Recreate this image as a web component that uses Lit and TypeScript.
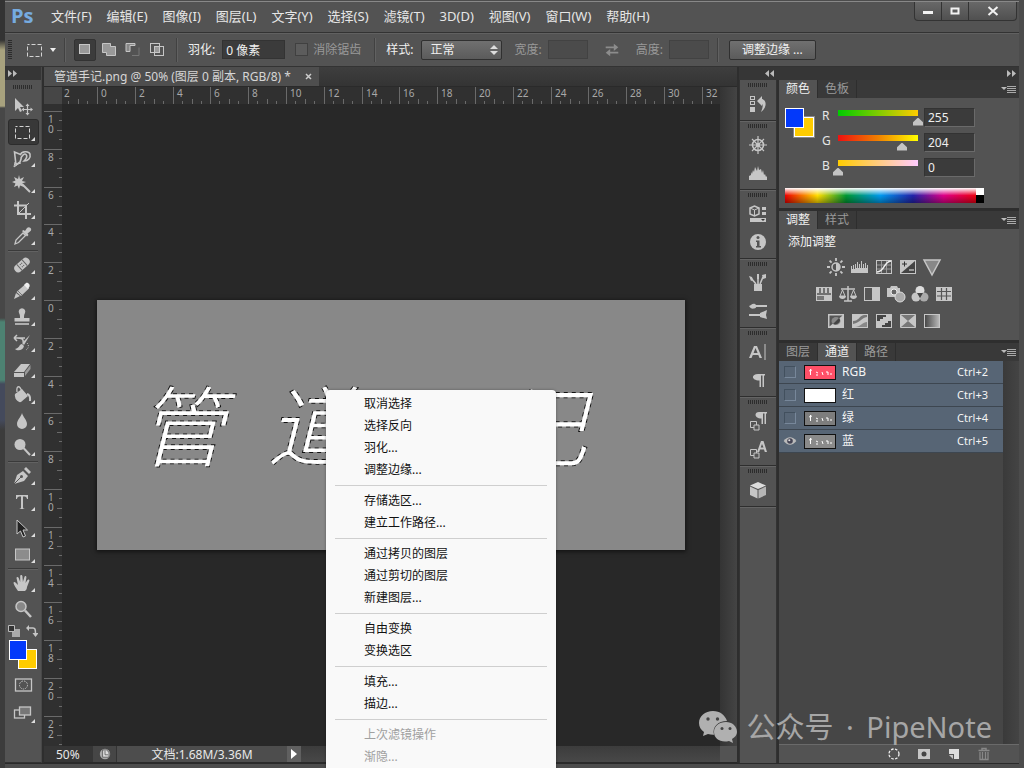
import { LitElement, html, svg, css } from "lit";
import { customElement, property } from "lit/decorators.js";
import { classMap } from "lit/directives/class-map.js";

const L = "#c6c6c6";

const glyphs: Record<string, any> = {
  move: svg`<path d="M2 2v13l3-3 2 4 2-1-2-4h4z" fill=${L}/><path d="M14.500 9v9M10 13.500h9" stroke=${L} stroke-width="1.200"/><path d="M14.500 7.500l-2 2.500h4zM14.500 19.500l-2-2.500h4zM8.500 13.500l2.500-2v4zM20 13.500l-2.500-2v4z" fill=${L}/>`,
  marquee: svg`<rect x="3.500" y="4.500" width="14" height="12" fill="none" stroke="#d4d4d4" stroke-dasharray="4 2" stroke-dashoffset="2"/>`,
  lasso: svg`<path d="M4 17L2.500 4l6 2.500c1-3 8-4 9.500-.500 1 4-2 7-6 7 2-2 3.500-5 2-6.500S9 8 9 11l-1 3z" fill="none" stroke=${L} stroke-width="1.600"/><path d="M3 14l-1 5 4-3 3-1" fill="none" stroke=${L}/>`,
  wand: svg`<path d="M7 1l1 4 4-2-2 4 4 1-4 1.500 2 3.500-4-1.500L7 15l-1.500-3.500L2 13l1.500-3.500L0 8l3.500-1.500L2 3l4 2z" fill=${L}/><path d="M10 10l8 8" stroke=${L} stroke-width="2"/>`,
  crop: svg`<path d="M6 1v13h13M2 5.500h12V19" fill="none" stroke=${L} stroke-width="2"/><path d="M6 14L17 3" stroke=${L}/>`,
  dropper: svg`<path d="M3 18l1-4 7-7 2.500 2.500-7 7z" fill="none" stroke=${L} stroke-width="1.300"/><path d="M10 5l1.500-1 1.500 1 2-3c1-1 2.500-1 3.500 0s1 2.500-.500 3.500l-2.500 2 1 1.500-1.500 1.500z" fill=${L}/>`,
  heal: svg`<g transform="rotate(-42 10 10)"><rect x="1" y="6" width="18" height="8" rx="4" fill=${L}/><path d="M6.500 6v8M13.500 6v8" stroke="#666"/><path d="M8.500 8.500h3M8.500 11.500h3" stroke="#555" stroke-dasharray="1 1"/></g>`,
  brush: svg`<path d="M2 18l2-6 4 3zM4.500 11L13 3.500l4 4L9 15z" fill=${L}/><path d="M12 4l2-2c1.500-1 4.500 1.500 3.500 3.500L16 8z" fill="#eee"/><path d="M6 10l4 4" stroke="#777"/>`,
  stamp: svg`<path d="M7 6a3.300 3.300 0 1 1 6 0c-1 2-1 3-1 5h5.500v3.500h-15V11H8c0-2 0-3-1-5z" fill=${L}/><path d="M3 17h14" stroke=${L} stroke-width="1.600"/>`,
  history: svg`<path d="M2 5h11M2 5l3-3M2 5l3 3M5 5c4 0 7 1 6 4" fill="none" stroke=${L} stroke-width="1.500"/><path d="M18 2L10 10l2 2zM10 11c-3 0-2 4-7 5 2 2 8 2 9-3z" fill=${L}/><path d="M15 10c2 2 2 5-1 7" stroke=${L} fill="none" stroke-dasharray="1 1.500"/>`,
  eraser: svg`<path d="M2 13l7-8h9l-6 8zM2 14h10v4H2z" fill=${L}/><path d="M13 13l5.500-7v4L13 17z" fill="#999"/>`,
  bucket: svg`<path d="M3 9l7-5 6 7-7 6c-3 1-7-4-6-8z" fill=${L}/><path d="M10 7C8 0 4 0 5 7" fill="none" stroke=${L} stroke-width="1.300"/><path d="M15 9c4 1 3 4 3 7" fill="none" stroke=${L} stroke-width="2"/>`,
  blur: svg`<path d="M10 2c1 4 5 7 5 11a5 5 0 0 1-10 0c0-4 4-7 5-11z" fill=${L}/>`,
  dodge: svg`<circle cx="8" cy="7.500" r="5.500" fill=${L}/><path d="M11.500 11l6.500 7" stroke=${L} stroke-width="2"/>`,
  pen: svg`<path d="M2 18l3-9 6-4 5 5-4 5z" fill=${L}/><path d="M2 18l7-7" stroke="#555"/><circle cx="9.500" cy="10.500" r="1.500" fill="#555"/><path d="M12 3l2-2 5 5-2 2z" fill=${L}/>`,
  type: svg`<path d="M4 3h12v4h-1c-.500-2-1-2.500-4-2.500V15c0 1.500.500 1.500 2 2H7c1.500-.500 2-.500 2-2V4.500C6 4.500 5.500 5 5 7H4z" fill=${L}/>`,
  arrow: svg`<path d="M5 2v14l3.500-3 2.500 6 2.500-1-2.500-6h4.500z" fill="#222" stroke=${L}/>`,
  rect: svg`<rect x="3.500" y="5" width="14" height="11" fill="#8c8c8c" stroke=${L}/>`,
  hand: svg`<path d="M6 18C4 15 2 12 1.500 10c0-1.500 1.500-1.500 2.500 0l2 2L4.500 5c0-1.500 1.700-1.500 2.200 0l1.500 4V3c0-1.500 2-1.500 2.200 0l.500 6 1.500-5c.500-1.500 2.200-1 2 .500L13.500 10l2-3c1-1.200 2.300-.300 1.800 1L15 14c0 2-1 3-2 4z" fill=${L}/>`,
  zoom: svg`<circle cx="8" cy="7.500" r="5" fill="#888" stroke=${L} stroke-width="1.500"/><path d="M12 11.500l6 6.500" stroke=${L} stroke-width="2.500"/>`,
  mask: svg`<rect x="2.500" y="4" width="16" height="12" fill="none" stroke=${L} stroke-width="1.300"/><circle cx="10.500" cy="10" r="4" fill="none" stroke=${L} stroke-dasharray="1.500 1.200"/>`,
  screen: svg`<rect x="2.500" y="7" width="10" height="8" fill="none" stroke=${L} stroke-width="1.300"/><rect x="7.500" y="4" width="11" height="8" fill="#777" stroke=${L} stroke-width="1.300"/>`,
  selNew: svg`<rect x="4.500" y="4.500" width="10" height="9" fill="#999" stroke=${L}/>`,
  selAdd: svg`<path d="M3.500 3.500h8v3h5v9h-9v-3h-4z" fill="#999" stroke=${L}/>`,
  selSub: svg`<path d="M3 11.500V3.500h9v2H7v6z" fill="#888" stroke=${L}/><path d="M9 15.500h7v-8" fill="none" stroke="#777"/>`,
  selInt: svg`<rect x="3.500" y="3.500" width="9" height="9" fill="none" stroke=${L}/><rect x="7.500" y="6.500" width="9" height="9" fill="none" stroke=${L}/><rect x="8" y="7" width="4" height="5" fill="#999"/>`,
  swap: svg`<path d="M3 7h10M7 13h10" stroke="#8c8c8c" stroke-width="2"/><path d="M12 3l5 4-5 4zM8 9l-5 4 5 4z" fill="#8c8c8c"/>`,
  historyPanel: svg`<g fill="none" stroke=${L}><rect x="2.500" y="2.500" width="4" height="3"/><rect x="2.500" y="7.500" width="4" height="3"/></g><rect x="2" y="13" width="5" height="5" fill=${L}/><path d="M9 7l5-5v3c5 1 5 9-1 13 2-5 2-7 1-8v2z" fill=${L}/>`,
  wheel: svg`<circle cx="10" cy="10" r="5.500" fill="none" stroke=${L} stroke-width="1.600"/><circle cx="10" cy="10" r="2" fill=${L}/><path d="M10 1v18M1 10h18M4 4l12 12M16 4L4 16" stroke=${L} stroke-width="1.200"/>`,
  histogram: svg`<path d="M1 17v-4l2-1v-3l1 2 1-4 1 2 1-5 2 4 1-5 1 4 2-1 1 4 1-3 1 5 1-1 1 3 1-1v4z" fill=${L}/>`,
  props: svg`<path d="M2 4l4.500-2L11 4v6l-4.500 2L2 10z" fill="none" stroke=${L} stroke-width="1.500"/><path d="M2 4l4.500 2L11 4M6.500 6v6" fill="none" stroke=${L}/><path d="M14 3h4v3h-4zM14 8h4v3h-4zM2 14h16v4H2z" fill=${L}/><path d="M13 15h4l-2 2z" fill="#333"/>`,
  info: svg`<circle cx="10" cy="10" r="8" fill=${L}/><path d="M8 8.500h3.500V14H13v1.500H8V14h1v-4H8z" fill="#555"/><circle cx="10" cy="5.500" r="1.500" fill="#555"/>`,
  brushes: svg`<path d="M6 11h8v7H6z" fill=${L}/><path d="M10 11V2M8 11L3 5M12 11l3-7" stroke=${L} stroke-width="1.600"/><path d="M1 3l3 1 1 3-2 1zM9 1h2v5H9zM14 2l4-1v4l-3 1z" fill=${L}/>`,
  presets: svg`<path d="M7 5h12M1 14h11" stroke=${L} stroke-width="2"/><path d="M1 5c2 0 3-3 6-2 2 1 2 4-1 4.500-2 .500-4-.500-5-2.500zM12 12l7-3-1 5 1 4-7-2z" fill=${L}/>`,
  charPanel: svg`<path d="M1 16L6 4h3l5 12h-2.500l-1.200-3H4.800L3.500 16zM5.600 11h4L7.500 6z" fill=${L}/><path d="M17 2v16" stroke=${L}/>`,
  para: svg`<path d="M10 4h7v1.500h-1V17h-1.500V5.500H13V17h-1.500v-6.500C3 10.500 3 4 10 4z" fill=${L}/>`,
  paraStyle: svg`<path d="M11 1h8v1.500h-1V13h-1.500V2.500H15V13h-1.500V7.500C6 7.500 6 1 11 1z" fill=${L}/><path d="M2.500 10.500h6v6h-6z" fill="none" stroke=${L}/><path d="M6 14h5v5H6z" fill="#555" stroke=${L}/>`,
  charStyle: svg`<path d="M9 13L13 2h2.500L19 13h-2.200l-.800-2.500h-4l-.800 2.500zM12.700 8.500h2.800L14 5z" fill=${L}/><path d="M2.500 10.500h6v6h-6z" fill="none" stroke=${L}/><path d="M6 14h5v5H6z" fill="#555" stroke=${L}/>`,
  cube: svg`<path d="M10 2l8 3.500-8 3.500-8-3.500z" fill="#ddd"/><path d="M2 6.500L9.500 10v8.500L2 15z" fill=${L}/><path d="M18 6.500L10.500 10v8.500L18 15z" fill="#b5b5b5"/>`,
  bright: svg`<circle cx="10" cy="10" r="4" fill="none" stroke=${L} stroke-width="1.500"/><path d="M10 6a4 4 0 0 1 0 8z" fill=${L}/><path d="M10 1v3M10 16v3M1 10h3M16 10h3M3.600 3.600l2 2M14.400 14.400l2 2M3.600 16.400l2-2M14.400 5.600l2-2" stroke=${L} stroke-width="1.800"/>`,
  levels: svg`<path d="M1 16V9h1v3h1V8h1v4h1V7h1v4h1V5h1v6h1V7h1v4h1V4h1v7h1V7h1v4h1V6h1v5h1V8h1v8z" fill=${L}/>`,
  curves: svg`<rect x="2.500" y="3.500" width="15" height="13" fill="none" stroke=${L}/><path d="M7.500 4v12M12.500 4v12M3 8h14M3 12h14" stroke="#999"/><path d="M3 15c8 0 6-10 14-11" fill="none" stroke="#eee" stroke-width="1.500"/>`,
  exposure: svg`<path d="M2 3h16v14H2z" fill=${L}/><path d="M17 4v12H3z" fill="#444"/><path d="M4 7h5M6.500 4.500v5" stroke="#333"/><path d="M11 13h5" stroke="#eee"/>`,
  vibrance: svg`<path d="M2 3h16l-8 15z" fill="#888" stroke=${L} stroke-width="1.500"/>`,
  hue: svg`<path d="M2 3h16v14H2z" fill=${L}/><path d="M3 10h14M6 4v5M10 4v5M14 4v5" stroke="#555" stroke-width="1.500"/><path d="M3 12h7v4H3z" fill="#777"/>`,
  balance: svg`<path d="M10 2v15M6 17h8M3 5h14" stroke=${L} stroke-width="1.500"/><path d="M4.500 6L2 12h5zM15.500 6L13 12h5z" fill="none" stroke=${L}/><path d="M1 12h7c0 4-7 4-7 0zM12 12h7c0 4-7 4-7 0z" fill=${L}/>`,
  bw: svg`<rect x="2.500" y="3.500" width="15" height="13" fill="#555" stroke=${L}/><path d="M10 4h7v12h-7z" fill=${L}/>`,
  photo: svg`<path d="M1 4h3l1-2h6l1 2h2v9H1z" fill=${L}/><circle cx="8" cy="8" r="3" fill="#666" stroke="#eee"/><circle cx="14" cy="13" r="5" fill="#aaa" stroke="#ddd"/>`,
  mixer: svg`<circle cx="10" cy="6.500" r="4.500" fill="#ddd"/><circle cx="6" cy="13" r="4.500" fill=${L}/><circle cx="14" cy="13" r="4.500" fill="#aaa"/><path d="M7 9h6l-3 5z" fill="#444"/>`,
  lookup: svg`<rect x="2" y="3" width="16" height="14" fill=${L}/><path d="M3 7.500h14M3 12h14M7.500 4v12M12.500 4v12" stroke="#555" stroke-width="1.200"/>`,
  invert: svg`<path d="M2 3h16v14H2z" fill=${L}/><path d="M3.500 4.500h13l-13 11z" fill="#555"/><ellipse cx="10" cy="10" rx="4.500" ry="4" fill="#888"/><path d="M13 7a5 4 0 0 1-6 6z" fill="#444"/>`,
  poster: svg`<path d="M2 3h16v14H2z" fill=${L}/><path d="M3 10c6 0 6-5 11-6h3v2c-6 1-6 5-14 7z" fill="#777"/><path d="M5 16c5 0 8-5 12-5v5z" fill="#888"/>`,
  thresh: svg`<path d="M2 3h16v14H2z" fill=${L}/><path d="M3 4h9v2H9v2H6v2H3zM8 16v-2h3v-2h3v-2h3v6z" fill="#444"/>`,
  selective: svg`<path d="M2.500 3.500h15v13h-15z" fill="#777" stroke=${L}/><path d="M3 4l7 6-7 6zM17 4l-7 6 7 6z" fill=${L}/>`,
  gradmap: svg`<defs><linearGradient id="gm"><stop stop-color="#444"/><stop offset="1" stop-color="#bbb"/></linearGradient></defs><rect x="2.500" y="3.500" width="15" height="13" fill="url(#gm)" stroke=${L}/>`,
  eye: svg`<path d="M1 10c5-7 13-7 18 0-5 7-13 7-18 0z" fill="#bbb"/><circle cx="10" cy="10" r="4" fill="#445"/><circle cx="9" cy="9" r="1.500" fill="#ddd"/>`,
  loadSel: svg`<circle cx="10" cy="10" r="5" fill="none" stroke="#eee" stroke-width="1.300" stroke-dasharray="2.500 1.500"/>`,
  saveSel: svg`<path d="M4 5h12v10H4z" fill=${L}/><circle cx="10" cy="10" r="2.500" fill="#444"/>`,
  newItem: svg`<path d="M5 5h10v10h-5v-5H5z" fill="#ddd"/><path d="M5 11h4v4z" fill=${L}/>`,
  trash: svg`<path d="M4.500 6.500h11M8 6V4.500h4V6" fill="none" stroke="#888" stroke-width="1.500"/><path d="M6 8v7.500h8V8M8.500 8v7M11.500 8v7" fill="none" stroke="#888" stroke-width="1.300"/>`,
  doc: svg`<circle cx="10" cy="10" r="6.500" fill="#aaa"/><path d="M7 5h5l3 3v6H7z" fill="#ddd" stroke="#555"/><path d="M10 6v5h4" fill="none" stroke="#555"/>`,
};

const icon = (name: string, size = 20) => html`<svg width=${size} height=${size} viewBox="0 0 20 20" aria-hidden="true">${glyphs[name]}</svg>`;
const panelMenu = html`<button class="pm" aria-label="面板菜单"><svg width="15" height="9" viewBox="0 0 15 9"><path d="M0 2h6L3 5z" fill="#bbb"/><path d="M6 1.500h9M6 3.500h9M6 5.500h9M6 7.500h9" stroke="#aaa"/></svg></button>`;

const base = css`
  :host { box-sizing: border-box; font-family: "Noto Sans", "Noto Sans CJK SC", sans-serif; font-size: 12px; line-height: 16px; color: #e6e6e6; }
  *, *::before, *::after { box-sizing: border-box; }
  button, input, select { font: inherit; color: inherit; margin: 0; padding: 0; border: 0; background: none; border-radius: 0; }
  svg { display: block; flex: none; }
  .grip { flex: none; align-self: center; width: 20px; height: 4px; background: repeating-linear-gradient(90deg, #2c2c2c 0 1px, transparent 1px 2px); }
`;

@customElement("ps-menubar")
class PsMenubar extends LitElement {
  static styles = [base, css`
    :host { display: flex; height: 32px; padding-left: 6px; background: #535353; border-bottom: 1px solid #333; border-top: 1px solid #888; }
    .logo { width: 40px; font: bold 20px/27px "Open Sans", "Noto Sans", sans-serif; color: #76abe0; }
    nav { display: flex; flex: 1; gap: 15px; align-items: center; padding-bottom: 2px; white-space: nowrap; font-size: 13px; }
    .ctl { display: flex; height: 19px; margin-right: 2px; border: 1px solid #333; border-top: 0; border-radius: 0 0 4px 4px; background: linear-gradient(#686868, #505050); }
    .ctl button { width: 27px; display: flex; align-items: center; justify-content: center; border-right: 1px solid #333; }
    .ctl button:last-child { width: 47px; border: 0; }
  `];
  render() {
    const items = ["文件(F)", "编辑(E)", "图像(I)", "图层(L)", "文字(Y)", "选择(S)", "滤镜(T)", "3D(D)", "视图(V)", "窗口(W)", "帮助(H)"];
    return html`<div class="logo">Ps</div>
      <nav>${items.map((t) => html`<button>${t}</button>`)}</nav>
      <div class="ctl">
        <button aria-label="最小化"><svg width="12" height="10"><path d="M1 5h10v3H1z" fill="#f2f2f2"/></svg></button>
        <button aria-label="最大化"><svg width="12" height="10"><path d="M2.500 2.500h7v5h-7z" fill="none" stroke="#f2f2f2" stroke-width="2"/></svg></button>
        <button aria-label="关闭"><svg width="12" height="10"><path d="M1.500 1l9 8M10.500 1l-9 8" stroke="#f2f2f2" stroke-width="2"/></svg></button>
      </div>`;
  }
}

@customElement("ps-options")
class PsOptions extends LitElement {
  static styles = [base, css`
    :host { display: flex; align-items: center; height: 34px; padding: 0 0 1px 3px; background: #535353; border-top: 1px solid #616161; border-bottom: 1px solid #333; white-space: nowrap; color: #f0f0f0; }
    .vgrip { width: 4px; height: 20px; margin-right: 12px; background: repeating-linear-gradient(#2c2c2c 0 1px, transparent 1px 2px); }
    .tool { display: flex; align-items: center; gap: 6px; }
    .sep { width: 2px; height: 24px; margin: 0 8px; background: #414141; border-right: 1px solid #616161; }
    .modes { display: flex; gap: 2px; }
    .modes button { width: 22px; height: 22px; display: flex; align-items: center; justify-content: center; border: 1px solid transparent; border-radius: 2px; }
    .modes .on { background: #3c3c3c; border-color: #333; }
    .field { height: 19px; padding: 0 3px; background: #3b3b3b; border: 1px solid #333; }
    .feather { width: 63px; margin: 0 10px 0 7px; }
    .size { width: 40px; margin-left: 6px; background: #4b4b4b; border-color: #424242; }
    .dim { color: #999; }
    .aa { margin-right: 5px; }
    .check { appearance: none; width: 13px; height: 13px; margin-right: 5px; background: #5c5c5c; border: 1px solid #404040; }
    .sel { position: relative; margin: 0 12px 0 8px; }
    select { appearance: none; width: 81px; height: 20px; padding-left: 8px; background: linear-gradient(#707070, #5b5b5b); border: 1px solid #303030; border-radius: 2px; }
    .sel svg { position: absolute; right: 4px; top: 5px; pointer-events: none; }
    .swap { margin: 0 15px; }
    .btn { height: 20px; width: 87px; background: linear-gradient(#707070, #5b5b5b); border: 1px solid #303030; border-radius: 2px; }
    .lead { margin-left: 2px; }
  `];
  render() {
    return html`<div class="vgrip"></div>
      <button class="tool" aria-label="矩形选框工具">${icon("marquee")}<svg width="6" height="4"><path d="M0 0h6L3 4z" fill="#eee"/></svg></button>
      <div class="sep"></div>
      <div class="modes">
        ${["selNew", "selAdd", "selSub", "selInt"].map((n, i) => html`<button class=${classMap({ on: i === 0 })} aria-label="选区模式 ${i + 1}">${icon(n)}</button>`)}
      </div>
      <div class="sep"></div>
      <label class="lead" for="feather">羽化:</label><input id="feather" class="field feather" value="0 像素">
      <input id="aa" type="checkbox" class="check" disabled><label for="aa" class="dim aa">消除锯齿</label>
      <div class="sep"></div>
      <label class="lead" for="style">样式:</label><span class="sel"><select id="style"><option>正常</option></select><svg width="8" height="10"><path d="M0 4h8L4 0zM0 6h8l-4 4z" fill="#ddd"/></svg></span>
      <label class="dim" for="w">宽度:</label><input id="w" class="field size" disabled>
      <button class="swap" aria-label="互换宽高" disabled>${icon("swap", 18)}</button>
      <label class="dim" for="h">高度:</label><input id="h" class="field size" disabled>
      <div class="sep"></div>
      <button class="btn lead">调整边缘 ...</button>`;
  }
}

@customElement("ps-toolbar")
class PsToolbar extends LitElement {
  static styles = [base, css`
    :host { display: flex; flex-direction: column; align-items: center; background: #535353; border-bottom: 1px solid #333; border-right: 1px solid #484848; }
    .head { align-self: stretch; height: 13px; padding: 3px; background: #363636; flex: none; }
    .top { height: 13px; display: flex; flex-direction: column; justify-content: center; flex: none; }
    .tool { position: relative; flex: none; width: 31px; height: 26px; display: flex; align-items: center; justify-content: center; border: 1px solid transparent; border-radius: 3px; }
    .on { background: #383838; border-color: #2c2c2c; }
    .more::after { content: ""; position: absolute; right: 3px; bottom: 3px; border: 2px solid transparent; border-right-color: #ddd; border-bottom-color: #ddd; }
    .more svg { margin-right: 2px; }
    .sep { flex: none; width: 30px; height: 3px; background: linear-gradient(transparent 1px, #3a3a3a 1px 2px, #626262 2px); }
    .mini { flex: none; display: flex; gap: 6px; height: 17px; align-items: center; }
    .sw { flex: none; display: grid; grid-template: 9px 11px 9px / 9px 9px 10px; margin: 1px 0 2px; }
    .fg { grid-area: 1 / 1 / 3 / 3; z-index: 1; background: #0339fa; border: 1px solid #fff; }
    .bg { grid-area: 2 / 2 / 4 / 4; background: #ffcc00; border: 1px solid #fff; }
    .wide { height: 28px; }
  `];
  render() {
    const groups = [
      ["move", "marquee", "lasso", "wand", "crop", "dropper"],
      ["heal", "brush", "stamp", "history", "eraser", "bucket", "blur", "dodge"],
      ["pen", "type", "arrow", "rect"],
      ["hand", "zoom"],
    ];
    const plain = ["move", "zoom"];
    return html`<div class="head"><svg width="9" height="7"><path d="M0 0l4 3.500L0 7zM5 0l4 3.500L5 7z" fill="#bbb"/></svg></div>
      <div class="top"><div class="grip"></div></div>
      ${groups.map((g, i) => html`${i ? html`<div class="sep"></div>` : ""}${g.map((n) => html`<button aria-label=${n} class=${classMap({ tool: true, on: n === "marquee", more: !plain.includes(n) })}>${icon(n)}</button>`)}`)}
      <div class="mini">
        <svg width="12" height="12"><path d="M4 4h8v8H4z" fill="#aaa"/><path d="M.500.500h6v6h-6z" fill="#333" stroke="#bbb"/></svg>
        <svg width="12" height="12"><path d="M2 3h5c2 0 2.500 1 2.500 6" fill="none" stroke="#c6c6c6" stroke-width="1.500"/><path d="M0 3l3-3v6zM6.500 8h6l-3 4z" fill="#c6c6c6"/></svg>
      </div>
      <div class="sw"><div class="fg"></div><div class="bg"></div></div>
      <button class="tool wide" aria-label="快速蒙版">${icon("mask")}</button>
      <button class="tool wide more" aria-label="屏幕模式">${icon("screen")}</button>`;
  }
}

const UNIT = 37.8;

@customElement("ps-document")
class PsDocument extends LitElement {
  static styles = [base, css`
    :host { display: grid; grid-template-columns: 18px minmax(0, 1fr) 17px; grid-template-rows: 20px 17px minmax(0, 1fr) 17px; background: #343434; }
    .tabs { grid-column: 1 / -1; display: flex; background: linear-gradient(#3e3e3e, #343434); border-bottom: 1px solid #2a2a2a; }
    .tab { display: flex; align-items: center; gap: 14px; padding: 0 7px 0 10px; background: #4e4e4e; color: #d6d6d6; white-space: nowrap; }
    .corner { background: #464646; }
    .ruler { background: #303030; width: 100%; height: 100%; overflow: hidden; }
    .ruler text { font-family: "Noto Sans", sans-serif; font-size: 10px; fill: #a8a8a8; }
    .vs { grid-row: 2 / 4; grid-column: 3; background: linear-gradient(90deg, #343434, #444); }
    .stage { position: relative; overflow: hidden; background: #282828; }
    .image { position: absolute; left: 35px; top: 196px; width: 588px; height: 250px; background: #888; box-shadow: 0 1px 4px 1px rgba(0, 0, 0, .5); }
    .script { font: italic 300 88px "Noto Sans CJK SC", sans-serif; fill: #fff; stroke: #111; stroke-width: 2; stroke-dasharray: 4 4; paint-order: stroke; }
    .status { grid-column: 1 / -1; display: flex; align-items: stretch; background: #464646; border-bottom: 1px solid #2a2a2a; color: #e8e8e8; line-height: 18px; }
    .zoom { width: 49px; padding-left: 12px; background: #363636; }
    .ic { width: 24px; display: flex; align-items: center; justify-content: center; border-right: 1px solid #333; background: #464646; }
    .size { width: 170px; text-align: center; background: #4d4d4d; }
    .go { width: 14px; display: flex; align-items: center; justify-content: center; background: #606060; }
    .fill { flex: 1; background: linear-gradient(#3c3c3c, #484848); }
    .end { width: 17px; background: #535353; }
  `];
  ticks(vertical: boolean) {
    const out = [];
    const origin = vertical ? 196 : 35;
    const last = vertical ? 11 : 16;
    for (let i = vertical ? -5 : -1; i <= last; i++) {
      const p = Math.round(origin + i * UNIT);
      const line = (o: number, len: number) => {
        const q = Math.round(p + o) + 0.5;
        return vertical ? svg`<path d="M${18 - len} ${q}H18" stroke="#6a6a6a"/>` : svg`<path d="M${q} ${17 - len}V17" stroke="#6a6a6a"/>`;
      };
      const label = String(Math.abs(i * 2));
      out.push(line(0, 18), line(UNIT / 4, 3), line(UNIT / 2, 5), line((UNIT * 3) / 4, 3));
      out.push(vertical
        ? [...label].map((d, k) => svg`<text x="4" y=${p + 12 + k * 10}>${d}</text>`)
        : svg`<text x=${i < 0 ? 2 : p + 4} y="10">${label}</text>`);
    }
    return out;
  }
  render() {
    return html`<div class="tabs"><div class="tab"><span>管道手记.png @ 50% (图层 0 副本, RGB/8) *</span><button aria-label="关闭文档"><svg width="7" height="7"><path d="M1 1l5 5M6 1L1 6" stroke="#ccc" stroke-width="1.500"/></svg></button></div></div>
      <div class="corner"></div>
      <svg class="ruler">${this.ticks(false)}</svg>
      <div class="vs"></div>
      <svg class="ruler">${this.ticks(true)}</svg>
      <div class="stage"><svg class="image" viewBox="0 0 588 250">
        <text class="script" x="40 170 290 402" y="160 160 172 160">管道手记</text>
      </svg></div>
      <div class="status">
        <div class="zoom">50%</div><div class="ic">${icon("doc", 16)}</div>
        <div class="size">文档:1.68M/3.36M</div>
        <button class="go" aria-label="状态栏选项"><svg width="6" height="10"><path d="M0 0l6 5-6 5z" fill="#fff"/></svg></button>
        <div class="fill"></div><div class="end"></div>
      </div>`;
  }
}

@customElement("ps-dock")
class PsDock extends LitElement {
  static styles = [base, css`
    :host { display: flex; flex-direction: column; background: #535353; border-left: 1px solid #333; border-right: 1px solid #333; }
    .group { display: flex; flex-direction: column; align-items: center; padding-top: 3px; border-bottom: 1px solid #2e2e2e; box-shadow: 0 1px #646464; }
    .group .grip { margin-bottom: 3px; }
    .item { height: 29px; width: 30px; display: flex; align-items: center; justify-content: center; }
    .item:first-of-type { height: 28px; }
    .item:last-child { height: 30px; padding-bottom: 2px; }
  `];
  render() {
    const g = [["historyPanel"], ["wheel", "histogram"], ["props", "info"], ["brushes", "presets"], ["charPanel", "para"], ["paraStyle", "charStyle"], ["cube"]];
    return g.map((a) => html`<div class="group"><div class="grip"></div>${a.map((n) => html`<button class="item" aria-label=${n}>${icon(n)}</button>`)}</div>`);
  }
}

@customElement("ps-tabs")
class PsTabs extends LitElement {
  @property({ attribute: false }) names: string[] = [];
  @property({ type: Number }) active = 0;
  static styles = [base, css`
    :host { display: flex; align-items: stretch; height: 18px; flex: none; background: #393939; }
    .t { padding: 0 7px; color: #9a9a9a; border-right: 1px solid #2e2e2e; }
    .on { background: #535353; color: #f0f0f0; }
    .pm { margin-left: auto; margin-right: 3px; display: flex; align-items: center; }
  `];
  render() {
    return html`${this.names.map((n, i) => html`<button class=${classMap({ t: true, on: i === this.active })}>${n}</button>`)}${panelMenu}`;
  }
}

@customElement("ps-color")
class PsColor extends LitElement {
  static styles = [base, css`
    :host { display: flex; flex-direction: column; background: #535353; }
    .main { display: flex; gap: 8px; padding: 10px 6px 0; }
    .sw { display: grid; grid-template: 9px 11px 9px / 9px 10px 10px; align-self: start; }
    .fg { grid-area: 1 / 1 / 3 / 3; z-index: 1; background: #0339fa; border: 1px solid #fff; }
    .bg { grid-area: 2 / 2 / 4 / 4; background: #ffcc00; border: 1px solid #fff; outline: 1px solid #888; }
    .rows { display: flex; flex-direction: column; gap: 6px; }
    .row { display: flex; height: 19px; align-items: flex-start; }
    .row label { width: 11px; }
    .row input[type="range"] { appearance: none; width: 90px; height: 16px; margin: 2px 1px 0 0; background: var(--g) 5px 0 / 80px 6px no-repeat; }
    .row input[type="range"]::-webkit-slider-thumb { appearance: none; width: 10px; height: 8px; margin-top: 7px; background: #c4c4c4; clip-path: polygon(50% 0, 100% 60%, 100% 100%, 0 100%, 0 60%); }
    .r { --g: linear-gradient(90deg, #00cc00, #ffcc00); }
    .g { --g: linear-gradient(90deg, #f01010, #f08000 50%, #ffff00); }
    .b { --g: linear-gradient(90deg, #ffcc00, #ffccff); }
    .num { width: 51px; height: 19px; padding: 0 3px; background: #3b3b3b; border: 1px solid #6a6a6a; border-top-color: #333; border-left-color: #333; color: #eee; }
    .ramp { display: flex; height: 15px; width: 199px; margin: 11px 6px 5px; }
    .hues { flex: 1; background: linear-gradient(#fff, rgba(255, 255, 255, 0) 50%, rgba(0, 0, 0, .35)), linear-gradient(90deg, #e00, #fd0 17%, #093 32%, #09e 50%, #22a 67%, #d08 83%, #e01); }
    .ends { width: 8px; background: linear-gradient(#fff 50%, #000 50%); }
  `];
  render() {
    const rows: [string, number][] = [["R", 255], ["G", 204], ["B", 0]];
    return html`<ps-tabs .names=${["颜色", "色板"]} active="0"></ps-tabs>
      <div class="main"><div class="sw"><div class="fg"></div><div class="bg"></div></div>
        <div class="rows">${rows.map(([n, v]) => html`<div class="row"><label for="s${n}">${n}</label><input id="s${n}" class=${n.toLowerCase()} type="range" min="0" max="255" .value=${String(v)}><input class="num" aria-label="${n} 值" value=${v}></div>`)}</div>
      </div>
      <div class="ramp"><div class="hues"></div><div class="ends"></div></div>`;
  }
}

@customElement("ps-adjust")
class PsAdjust extends LitElement {
  static styles = [base, css`
    :host { display: flex; flex-direction: column; background: #535353; }
    .title { padding: 5px 9px 3px; color: #f4f4f4; }
    .rows { display: flex; flex-direction: column; padding: 0 30px 6px 0; }
    .row { display: flex; justify-content: center; gap: 4px; height: 27px; align-items: center; }
  `];
  render() {
    const rows = [["bright", "levels", "curves", "exposure", "vibrance"], ["hue", "balance", "bw", "photo", "mixer", "lookup"], ["invert", "poster", "thresh", "selective", "gradmap"]];
    return html`<ps-tabs .names=${["调整", "样式"]} active="0"></ps-tabs>
      <div class="title">添加调整</div>
      <div class="rows">${rows.map((r) => html`<div class="row">${r.map((n) => html`<button aria-label=${n}>${icon(n)}</button>`)}</div>`)}</div>`;
  }
}

@customElement("ps-channels")
class PsChannels extends LitElement {
  static styles = [base, css`
    :host { display: flex; flex-direction: column; flex: 1; background: #464646; min-height: 0; }
    .body { flex: 1; display: flex; min-height: 0; }
    .list { flex: 1; margin: 0; padding: 0; list-style: none; }
    .list li { display: flex; align-items: center; height: 23px; padding: 0 15px 0 5px; background: #576575; border-bottom: 1px solid #3d4650; color: #f4f4f4; }
    .vis { appearance: none; width: 12px; height: 12px; border: 1px solid #42505e; border-right-color: #77879a; border-bottom-color: #77879a; }
    .eye { width: 12px; display: flex; justify-content: center; }
    .th { width: 32px; height: 15px; margin: 0 6px 0 8px; border: 1px solid #111; }
    .name { flex: 1; }
    .key { font-size: 11px; }
    .sb { width: 16px; background: linear-gradient(90deg, #3a3a3a, #444); }
    .foot { flex: none; display: flex; gap: 10px; justify-content: flex-end; align-items: center; height: 19px; padding-right: 25px; background: #535353; border-top: 1px solid #6a6a6a; }
  `];
  render() {
    const ch = [["RGB", "#ff5068", "Ctrl+2"], ["红", "#ffffff", "Ctrl+3"], ["绿", "#7d7d7d", "Ctrl+4"], ["蓝", "#8a8a8a", "Ctrl+5"]];
    return html`<ps-tabs .names=${["图层", "通道", "路径"]} active="1"></ps-tabs>
      <div class="body"><ul class="list">${ch.map(([n, c, k], i) => html`<li>
          ${i === 3 ? html`<button class="eye" aria-label="隐藏${n}">${icon("eye", 14)}</button>` : html`<input type="checkbox" class="vis" aria-label="显示${n}">`}
          <svg class="th" viewBox="0 0 30 13"><rect width="30" height="13" fill=${c}/><path d="M4 5l3-1M5.500 3v6M11 6l2 1M11 9h2M17 6l1 3M21 6h2v3M25 8h2" stroke="#fff" fill="none"/></svg>
          <span class="name">${n}</span><span class="key">${k}</span></li>`)}</ul><div class="sb"></div></div>
      <div class="foot">${["loadSel", "saveSel", "newItem", "trash"].map((n) => html`<button aria-label=${n}>${icon(n)}</button>`)}</div>`;
  }
}

@customElement("ps-context-menu")
class PsContextMenu extends LitElement {
  static styles = [base, css`
    :host { display: flex; flex-direction: column; width: 230px; padding: 3px 9px; background: #f9f9f9; border-radius: 4px 4px 0 0; box-shadow: 0 0 3px rgba(0, 0, 0, .35); color: #111; }
    button { height: 22px; padding-left: 29px; text-align: left; }
    button:disabled { color: #a0a0a0; }
    hr { width: 100%; margin: 4px 0; border: 0; border-top: 1px solid #cfcfcf; }
  `];
  render() {
    const groups = [["取消选择", "选择反向", "羽化...", "调整边缘..."], ["存储选区...", "建立工作路径..."], ["通过拷贝的图层", "通过剪切的图层", "新建图层..."], ["自由变换", "变换选区"], ["填充...", "描边..."], ["上次滤镜操作", "渐隐..."]];
    return groups.map((g, i) => html`${i ? html`<hr>` : ""}${g.map((t) => html`<button ?disabled=${i === 5}>${t}</button>`)}`);
  }
}

@customElement("app-root")
class AppRoot extends LitElement {
  static styles = [base, css`
    :host { position: relative; display: flex; flex-direction: column; height: 100vh; overflow: hidden; padding: 1px 5px 4px; background: linear-gradient(90deg, transparent 5px, #4c4c4c 5px), linear-gradient(#333 40px, #a8a27e 50px 106px, #474747 108px 318px, #4d8272 322px 380px, #444a5c 384px 420px, #3c3c3c 430px); }
    .work { flex: 1; min-height: 0; display: grid; grid-template: 13px minmax(0, 1fr) / 37px minmax(0, 1fr) 38px 240px; column-gap: 2px; background: #2e2e2e; border-bottom: 1px solid #2a2a2a; }
    ps-toolbar, ps-document { grid-row: 1 / 3; }
    .head { grid-column: 3 / 5; grid-row: 1; display: flex; align-items: center; justify-content: space-between; padding: 0 3px 0 26px; background: #363636; }
    ps-dock { grid-column: 3; grid-row: 2; }
    .panels { grid-column: 4; grid-row: 2; display: flex; flex-direction: column; gap: 3px; min-height: 0; }
    .menu { position: absolute; left: 326px; top: 390px; }
    .mark { position: absolute; right: 32px; bottom: 24px; display: flex; align-items: center; gap: 9px; font: 29px/34px "Noto Sans", "Noto Sans CJK SC", sans-serif; color: #a6a6a6; white-space: nowrap; }
    .dot { margin: 0 5px; }
  `];
  render() {
    return html`<ps-menubar></ps-menubar><ps-options></ps-options>
      <div class="work">
        <ps-toolbar></ps-toolbar><ps-document></ps-document>
        <div class="head"><svg width="9" height="7"><path d="M4 0L0 3.500 4 7zM9 0L5 3.500 9 7z" fill="#bbb"/></svg><svg width="9" height="7"><path d="M0 0l4 3.500L0 7zM5 0l4 3.500L5 7z" fill="#bbb"/></svg></div>
        <ps-dock></ps-dock>
        <div class="panels"><ps-color></ps-color><ps-adjust></ps-adjust><ps-channels></ps-channels></div>
      </div>
      <div class="mark"><svg width="38" height="32" viewBox="0 0 38 32"><path d="M14 0C6 0 0 5 0 12c0 4 2 7 5 9l-1 4 5-2c2 .600 4 .800 6 .700C13 16 19 10 28 10 26 4 21 0 14 0z" fill="#b0b0b0"/><path d="M27 11c-7 0-12 4-12 10 0 7 7 11 15 9l4 2-1-4c3-2 5-4 5-7 0-6-5-10-11-10z" fill="#b0b0b0"/><g fill="#444"><circle cx="9" cy="8" r="1.700"/><circle cx="18.500" cy="8" r="1.700"/><circle cx="23" cy="17.500" r="1.500"/><circle cx="31" cy="17.500" r="1.500"/></g></svg><span>公众号<span class="dot"> · </span>PipeNote</span></div>
      <ps-context-menu class="menu"></ps-context-menu>`;
  }
}
